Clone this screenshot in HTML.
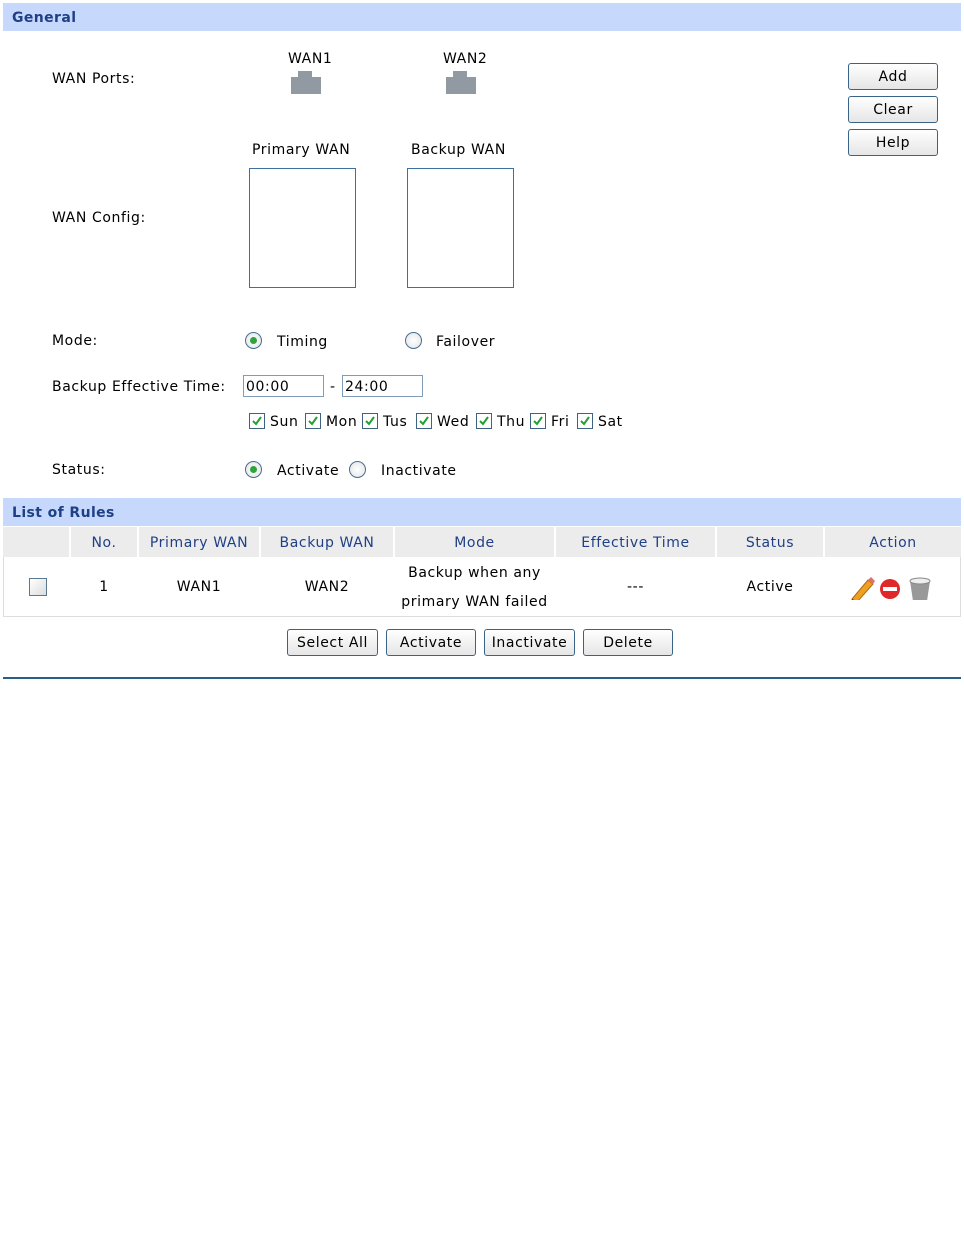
<!DOCTYPE html>
<html><head><meta charset="utf-8"><style>
*{margin:0;padding:0;box-sizing:border-box}
body{width:964px;height:1257px;background:#fff;position:relative;font-family:"DejaVu Sans","Liberation Sans",sans-serif;font-size:14px;color:#000;overflow:hidden;letter-spacing:0.6px}
.a{position:absolute;white-space:nowrap;padding-top:2px}
.bar{position:absolute;left:3px;width:958px;height:28px;background:#c6d9fd;color:#1f3f86;font-weight:bold;font-size:14px;padding:7px 9px;letter-spacing:0.4px}
.btn{position:absolute;height:27px;border:1px solid #3a6487;border-radius:3px;background:linear-gradient(#fff,#e6e6e6);text-align:center;line-height:27px;font-size:14px}
.port{position:absolute;width:30px;height:17px;background:#9199a3}
.port:before{content:"";position:absolute;left:7px;top:-6px;width:14px;height:7px;background:#9199a3}
.box{position:absolute;width:107px;height:120px;border:1px solid #3f6f9c}
.radio{position:absolute;width:17px;height:17px;border-radius:50%;border:1px solid #4a6d8c;background:radial-gradient(#fff,#dfe3e6)}
.radio.on:after{content:"";position:absolute;left:4px;top:4px;width:7px;height:7px;border-radius:50%;background:#2fa33c}
.inp{position:absolute;height:22px;width:81px;border:1px solid #7f9db9;padding:3px 2px;font-size:14px}
.cb{position:absolute;width:16px;height:16px;border:1px solid #3f6280;background:#fff}
.cb svg{position:absolute;left:1px;top:1px}
.th{position:absolute;top:527px;height:30px;background:#ececec;color:#1f3f86;text-align:center;line-height:32px}
.td{position:absolute;top:557px;height:59px;text-align:center;line-height:61px}
</style></head><body>
<div class="bar" style="top:3px">General</div>
<div class="a" style="left:52px;top:69px">WAN Ports:</div>
<div class="a" style="left:288px;top:49px">WAN1</div>
<div class="port" style="left:291px;top:77px"></div>
<div class="a" style="left:443px;top:49px">WAN2</div>
<div class="port" style="left:446px;top:77px"></div>
<div class="btn" style="left:848px;top:63px;width:90px">Add</div>
<div class="btn" style="left:848px;top:96px;width:90px">Clear</div>
<div class="btn" style="left:848px;top:129px;width:90px">Help</div>
<div class="a" style="left:252px;top:140px">Primary WAN</div>
<div class="a" style="left:411px;top:140px">Backup WAN</div>
<div class="box" style="left:249px;top:168px"></div>
<div class="box" style="left:407px;top:168px"></div>
<div class="a" style="left:52px;top:208px">WAN Config:</div>
<div class="a" style="left:52px;top:331px">Mode:</div>
<div class="radio on" style="left:245px;top:332px"></div>
<div class="a" style="left:277px;top:332px">Timing</div>
<div class="radio" style="left:405px;top:332px"></div>
<div class="a" style="left:436px;top:332px">Failover</div>
<div class="a" style="left:52px;top:377px">Backup Effective Time:</div>
<div class="inp" style="left:243px;top:375px">00:00</div>
<div class="a" style="left:330px;top:377px">-</div>
<div class="inp" style="left:342px;top:375px">24:00</div>
<div class="a" style="left:52px;top:460px">Status:</div>
<div class="radio on" style="left:245px;top:461px"></div>
<div class="a" style="left:277px;top:461px">Activate</div>
<div class="radio" style="left:349px;top:461px"></div>
<div class="a" style="left:381px;top:461px">Inactivate</div>

<div class="bar" style="top:498px">List of Rules</div>
<div style="position:absolute;left:3px;top:527px;width:958px;height:90px;border:1px solid #ddd;border-top:0"></div>
<div class="th" style="left:3px;width:66px"></div>
<div class="th" style="left:71px;width:66px">No.</div>
<div class="th" style="left:139px;width:120px">Primary WAN</div>
<div class="th" style="left:261px;width:132px">Backup WAN</div>
<div class="th" style="left:395px;width:159px">Mode</div>
<div class="th" style="left:556px;width:159px">Effective Time</div>
<div class="th" style="left:717px;width:106px">Status</div>
<div class="th" style="left:825px;width:136px">Action</div>
<div style="position:absolute;left:29px;top:578px;width:18px;height:18px;border:1px solid #5a7890;background:linear-gradient(135deg,#fff,#dcdcdc)"></div>
<div class="td" style="left:71px;width:66px">1</div>
<div class="td" style="left:139px;width:120px">WAN1</div>
<div class="td" style="left:261px;width:132px">WAN2</div>
<div class="td" style="left:395px;width:159px;line-height:29px;padding-top:2px">Backup when any<br>primary WAN failed</div>
<div class="td" style="left:556px;width:159px">---</div>
<div class="td" style="left:717px;width:106px">Active</div>
<svg class="a" style="left:848px;top:574px" width="90" height="26">
<path d="M4 23 L20 4 L25 8 L9 26 Z" fill="#f0a020" stroke="#b06a10" stroke-width="1"/>
<path d="M20 4 L23 1 L27 5 L25 8Z" fill="#e07070"/>
<path d="M4 23 L3 26 L7 25Z" fill="#333"/>
<circle cx="42" cy="13" r="10" fill="#e02828"/><rect x="35" y="11" width="14" height="4" fill="#fff"/>
<path d="M62 5 L82 5 L79 25 L65 25 Z" fill="#999"/><ellipse cx="72" cy="5" rx="10" ry="3" fill="#eee" stroke="#888"/>
</svg>
<div class="btn" style="left:287px;top:629px;width:91px">Select All</div>
<div class="btn" style="left:386px;top:629px;width:90px">Activate</div>
<div class="btn" style="left:484px;top:629px;width:91px">Inactivate</div>
<div class="btn" style="left:583px;top:629px;width:90px">Delete</div>
<div style="position:absolute;left:3px;top:677px;width:958px;height:2px;background:#2a5e8a"></div>
<div class="cb" style="left:249px;top:413px"><svg width="12" height="12"><path d="M2 6 L5 9 L10 2" stroke="#22a030" stroke-width="2" fill="none"/></svg></div><div class="a" style="left:270px;top:412px">Sun</div>
<div class="cb" style="left:305px;top:413px"><svg width="12" height="12"><path d="M2 6 L5 9 L10 2" stroke="#22a030" stroke-width="2" fill="none"/></svg></div><div class="a" style="left:326px;top:412px">Mon</div>
<div class="cb" style="left:362px;top:413px"><svg width="12" height="12"><path d="M2 6 L5 9 L10 2" stroke="#22a030" stroke-width="2" fill="none"/></svg></div><div class="a" style="left:383px;top:412px">Tus</div>
<div class="cb" style="left:416px;top:413px"><svg width="12" height="12"><path d="M2 6 L5 9 L10 2" stroke="#22a030" stroke-width="2" fill="none"/></svg></div><div class="a" style="left:437px;top:412px">Wed</div>
<div class="cb" style="left:476px;top:413px"><svg width="12" height="12"><path d="M2 6 L5 9 L10 2" stroke="#22a030" stroke-width="2" fill="none"/></svg></div><div class="a" style="left:497px;top:412px">Thu</div>
<div class="cb" style="left:530px;top:413px"><svg width="12" height="12"><path d="M2 6 L5 9 L10 2" stroke="#22a030" stroke-width="2" fill="none"/></svg></div><div class="a" style="left:551px;top:412px">Fri</div>
<div class="cb" style="left:577px;top:413px"><svg width="12" height="12"><path d="M2 6 L5 9 L10 2" stroke="#22a030" stroke-width="2" fill="none"/></svg></div><div class="a" style="left:598px;top:412px">Sat</div>
</body></html>
